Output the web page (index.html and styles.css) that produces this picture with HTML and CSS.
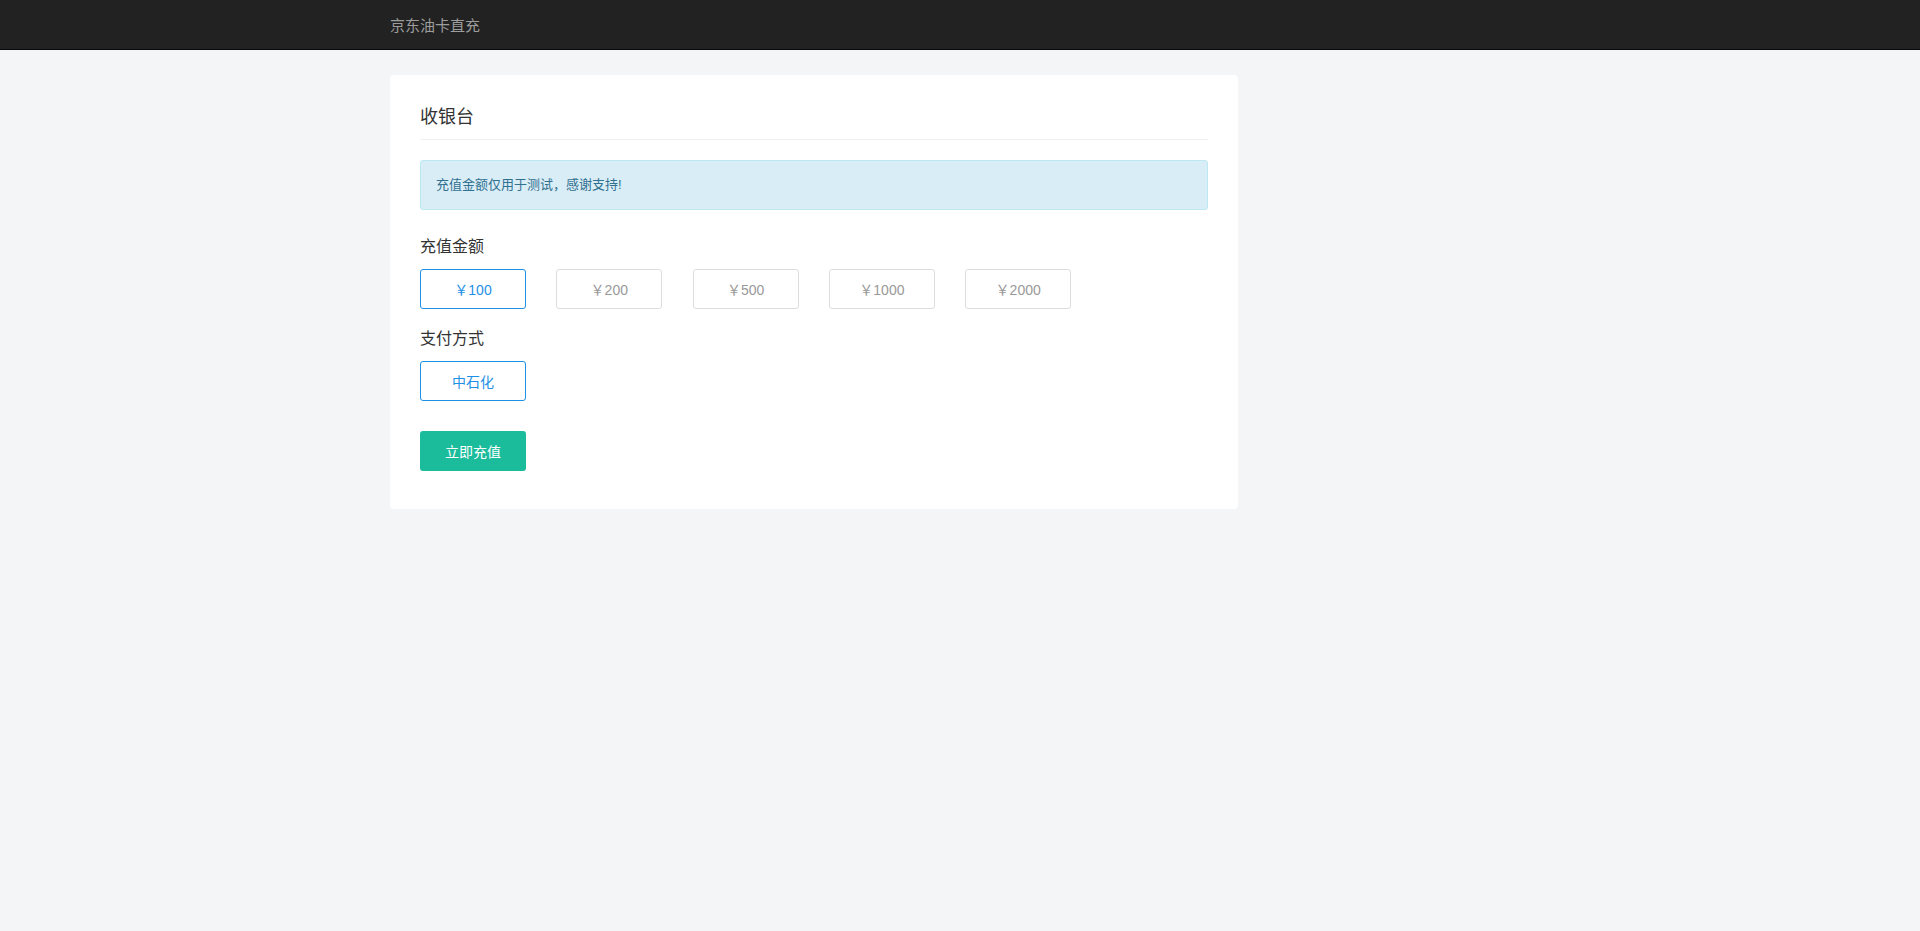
FILE: index.html
```html
<!DOCTYPE html>
<html lang="zh-CN">
<head>
<meta charset="utf-8">
<title>京东油卡直充</title>
<link rel="stylesheet" href="styles.css">
</head>
<body>
<header class="navbar">
  <div class="navbar-inner">
    <span class="brand">京东油卡直充</span>
  </div>
</header>
<main class="page">
  <section class="card">
    <h1 class="card-title">收银台</h1>
    <div class="alert">充值金额仅用于测试，感谢支持!</div>
    <div class="label">充值金额</div>
    <div class="options">
      <button class="opt active">￥100</button>
      <button class="opt">￥200</button>
      <button class="opt">￥500</button>
      <button class="opt">￥1000</button>
      <button class="opt">￥2000</button>
    </div>
    <div class="label">支付方式</div>
    <div class="options">
      <button class="opt active">中石化</button>
    </div>
    <button class="submit">立即充值</button>
  </section>
</main>
</body>
</html>
```
FILE: styles.css
```css
* { box-sizing: border-box; }
html, body {
  margin: 0;
  padding: 0;
  background: #f4f5f7;
  font-family: "Liberation Sans", "Noto Sans CJK SC", sans-serif;
  color: #333;
}
.navbar {
  height: 50px;
  background: #222;
  border-bottom: 1px solid #080808;
}
.navbar-inner {
  width: 1140px;
  margin-left: 390px;
  height: 49px;
  display: flex;
  align-items: center;
}
.brand {
  font-size: 15px;
  color: #9d9d9d;
}
.page {
  padding-top: 25px;
  padding-left: 390px;
}
.card {
  width: 848px;
  background: #fff;
  border-radius: 4px;
  padding: 30px 30px 38px;
}
.card-title {
  margin: 0;
  font-size: 18px;
  line-height: 24px;
  font-weight: normal;
  color: #333;
  padding-bottom: 10px;
  border-bottom: 1px solid #eef0f2;
}
.alert {
  margin-top: 20px;
  background: #d9edf7;
  border: 1px solid #bce8f1;
  border-radius: 3px;
  color: #31708f;
  font-size: 13px;
  line-height: 18px;
  padding: 15px 15px;
}
.label {
  font-size: 16px;
  line-height: 22px;
  margin-top: 26px;
  color: #333;
}
.label + .options { margin-top: 11px; }
.options + .label { margin-top: 19px; }
.options {
  display: flex;
  gap: 30.3px;
}
.opt {
  width: 106px;
  height: 40px;
  background: #fff;
  border: 1px solid #ddd;
  border-radius: 3px;
  font-family: inherit;
  font-size: 14px;
  color: #999;
  padding: 0;
}
.opt.active {
  border-color: #1e90e6;
  color: #1e90e6;
}
.submit {
  display: block;
  margin-top: 30px;
  width: 106px;
  height: 40px;
  background: #1abc9c;
  border: none;
  border-radius: 3px;
  color: #fff;
  font-family: inherit;
  font-size: 14px;
  padding: 0;
}
```
